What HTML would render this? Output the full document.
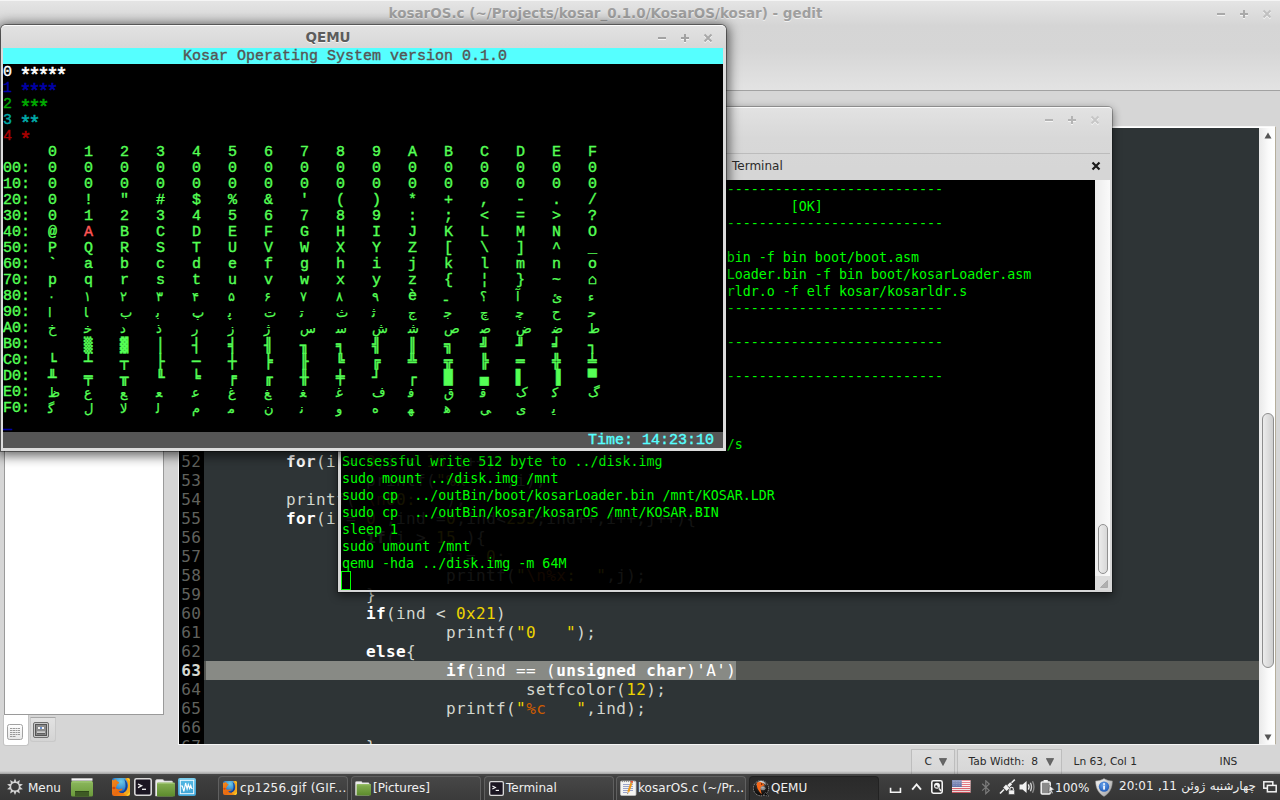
<!DOCTYPE html>
<html lang="en"><head><meta charset="utf-8"><title>kosarOS.c - gedit</title>
<style>
html,body{margin:0;padding:0}
body{width:1280px;height:800px;overflow:hidden;position:relative;background:#d6d6d6;font-family:"DejaVu Sans","Liberation Sans",sans-serif;font-size:13px;color:#2e2e2e}
.a{position:absolute}
/* gedit */
#gtop{left:0;top:0;width:1280px;height:90px;background:linear-gradient(#f6f6f6 0,#f4f4f4 1px,#e4e4e4 1.5px,#e3e3e3 3px,#d5d5d5 26px,#d6d6d6 50px,#e3e3e3 90px)}
#gline{left:0;top:90px;width:1280px;height:1px;background:#a2a2a2}
#gtitle{left:0;top:5px;width:1211px;text-align:center;font-weight:bold;font-size:13.5px;color:#9f9f9f;text-shadow:0 1px 0 #f2f2f2;white-space:nowrap}
.wb{font-weight:bold;color:#b4b4b4;text-shadow:0 1px 0 #f4f4f4}
.wb i{position:absolute;background:currentColor;box-shadow:0 1px 0 #f4f4f4}
#side{left:4px;top:95px;width:158px;height:618px;background:#fff;border:1px solid #9a9a9a}
#stab1{left:3px;top:715px;width:26px;height:31px;background:#fff;border:1px solid #c4c4c4;border-top:none;border-radius:0 0 3px 3px;box-sizing:border-box}
#stab2{left:30px;top:717px;width:26px;height:25px;background:linear-gradient(#e2e2e2,#d4d4d4);border:1px solid #c9c9c9;border-top-color:#a8a8a8;border-radius:0 0 3px 3px;box-sizing:border-box}
#edframe{left:178px;top:126px;width:1098px;height:619px;background:#fff;box-sizing:border-box;border:1px solid #f6f6f6;border-right-color:#b5ae9c}
#gut{left:179px;top:128px;width:25px;height:616px;background:#000;overflow:hidden}
#codebg{left:204px;top:128px;width:1055px;height:616px;background:#2e3436;overflow:hidden}
.mono{font-family:"DejaVu Sans Mono","Liberation Mono",monospace}
#gut .in{position:absolute;left:0;top:1px;width:22.3px;text-align:right;font-size:16px;letter-spacing:0.37px;line-height:19px;color:#60625e}
#gut .cur{color:#d3d7cf;font-weight:bold}
#codebg .in{position:absolute;left:0;top:1px;width:1055px;font-size:16px;letter-spacing:0.37px;line-height:19px;color:#d3d7cf}
.ln{height:19px;padding-left:2px;white-space:pre;tab-size:8}
.ln.cur{background:#555753}
.ln b{color:#fff}
.n{color:#edd400}.o{color:#ce5c00}
.sel{background:#888a85;color:#fff;display:inline-block;height:19px}
#vsb{left:1259px;top:128px;width:16px;height:616px;background:linear-gradient(90deg,#e9e9e9,#fbfbfb 60%,#fff)}
#vthumb{left:1262px;top:413px;width:12px;height:255px;box-sizing:border-box;border:1px solid #8e8e8e;border-radius:7px;background:linear-gradient(90deg,#ececec,#cfcfcf)}
/* status bar */
.sbtn{top:749px;height:25px;box-sizing:border-box;border:1px solid #bdbdbd;border-bottom:none;background:linear-gradient(#dedede,#d6d6d6);font-size:12px}
.st12{top:755.5px;font-size:10.67px;line-height:12px;color:#2a2a2a;white-space:nowrap}
/* terminal */
#twin{left:338px;top:107px;width:774px;height:485px;background:linear-gradient(#e2e2e2 0,#d8d8d8 30px,#d6d6d6 60px);border-radius:4px 4px 0 0;box-shadow:0 0 0 1px rgba(0,0,0,.25),0 3px 9px 1px rgba(0,0,0,.45);border-top:1px solid #fafafa;box-sizing:border-box}
#tscr{left:341px;top:180px;width:754px;height:410px;background:#000;overflow:hidden}
#tscr .in{position:absolute;left:1px;top:1px;font-size:13.325px;line-height:17px;color:#00ff00}
#tscr .in div{height:17px;white-space:pre}
.ghost{position:absolute;left:-137px;top:272px;width:1055px;font-size:16px;letter-spacing:0.37px;line-height:19px;color:#d3d7cf;opacity:.085}
.ghost .ln b{color:#fff}
.tcur{position:absolute;left:-1px;top:390px;width:10px;height:19px;box-sizing:border-box;border:1px solid #00ff00}
/* qemu */
#qwin{left:1px;top:25px;width:725px;height:426px;background:linear-gradient(#e2e2e2 0,#d7d7d7 23px,#dcdcdc 23px);border-radius:5px 5px 0 0;box-shadow:0 0 0 1px rgba(0,0,0,.4),0 2px 12px 3px rgba(0,0,0,.6);border-top:1px solid #fcfcfc;box-sizing:border-box}
#qtitle{left:1px;top:29px;width:654px;text-align:center;font-weight:bold;font-size:13.5px;color:#5c5c5c;text-shadow:0 1px 0 #f6f6f6}
#vga{left:3px;top:48px;width:720px;height:400px;background:#000;overflow:hidden;font-family:"Liberation Mono","DejaVu Sans Mono",monospace;font-weight:normal;-webkit-text-stroke:0.4px;font-size:15px;line-height:16px;color:#55ff55}
.r{height:16px;overflow:visible;white-space:pre;position:relative;top:1px}
.t0,.st{top:0;line-height:18px}
.as{position:relative;top:6px;left:-1.5px;font-size:20px;letter-spacing:-3px;line-height:0;-webkit-text-stroke:0.6px}
.t0{background:#55ffff;color:#555}
.st{background:#555;color:#55ffff}
.l{display:inline-block;width:45px;height:16px;vertical-align:top}
.c{display:inline-block;width:36px;height:16px;vertical-align:top}
.c.red{color:#ff5555}
.c.ar{font-family:"DejaVu Sans","DejaVu Sans Mono",sans-serif;font-size:13px;font-weight:normal;direction:ltr;-webkit-text-stroke:0.25px}
.c.bx{font-family:"DejaVu Sans Mono",monospace;font-weight:normal;font-size:14px;-webkit-text-stroke:0.55px}
/* panel */
#panel{left:0;top:774px;width:1280px;height:26px;background:linear-gradient(#484848 0,#3f3f3f 3px,#353535 26px);color:#eee;font-size:12px}
#pshadow{left:0;top:771px;width:1280px;height:3px;background:linear-gradient(rgba(0,0,0,0),rgba(0,0,0,.25))}
.tb{top:776px;height:25px;width:130px;box-sizing:border-box;border:1px solid #606060;border-bottom:none;border-radius:4px 4px 0 0;background:linear-gradient(#474747,#3a3a3a);color:#f0f0f0;font-size:12px;line-height:22px;white-space:nowrap;overflow:hidden}
.tb.act{background:linear-gradient(#2a2a2a,#303030);border-color:#222}
.tb span{position:absolute;left:21px;top:0}
.tray{color:#f0f0f0;font-size:12px;white-space:nowrap}
</style></head><body>

<!-- gedit main window -->
<div class="a" id="gtop"></div>
<div class="a" id="gline"></div>
<div class="a" id="gtitle">kosarOS.c (~/Projects/kosar_0.1.0/KosarOS/kosar) - gedit</div>
<div class="a wb" style="left:1217px;top:13px;width:8px;height:2px;background:#a9a9a9;box-shadow:0 1px 0 #f4f4f4"></div>
<div class="a wb" style="left:1240px;top:13px;width:8px;height:2px;background:#a9a9a9;box-shadow:0 1px 0 #f4f4f4"></div>
<div class="a wb" style="left:1243px;top:10px;width:2px;height:8px;background:#a9a9a9;box-shadow:0 1px 0 #f4f4f4"></div>
<svg class="a" style="left:1262px;top:9px" width="10" height="11" viewBox="0 0 10 11"><path d="M1.5 2.5l7 7M8.5 2.5l-7 7" stroke="#f4f4f4" stroke-width="2"/><path d="M1.5 1.5l7 7M8.5 1.5l-7 7" stroke="#c0c0c0" stroke-width="2"/></svg>

<div class="a" id="side"></div>
<div class="a" id="stab2"></div>
<div class="a" id="stab1"></div>

<div class="a" id="edframe"></div>
<div class="a mono" id="gut"><div class="in">
<div>35</div>
<div>36</div>
<div>37</div>
<div>38</div>
<div>39</div>
<div>40</div>
<div>41</div>
<div>42</div>
<div>43</div>
<div>44</div>
<div>45</div>
<div>46</div>
<div>47</div>
<div>48</div>
<div>49</div>
<div>50</div>
<div>51</div>
<div>52</div>
<div>53</div>
<div>54</div>
<div>55</div>
<div>56</div>
<div>57</div>
<div>58</div>
<div>59</div>
<div>60</div>
<div>61</div>
<div>62</div>
<div class="cur">63</div>
<div>64</div>
<div>65</div>
<div>66</div>
<div>67</div>
</div></div>
<div class="a mono" id="codebg"><div class="in">
<div class="ln"></div>
<div class="ln"></div>
<div class="ln"></div>
<div class="ln"></div>
<div class="ln"></div>
<div class="ln"></div>
<div class="ln"></div>
<div class="ln"></div>
<div class="ln"></div>
<div class="ln"></div>
<div class="ln"></div>
<div class="ln"></div>
<div class="ln"></div>
<div class="ln"></div>
<div class="ln"></div>
<div class="ln"></div>
<div class="ln"></div>
<div class="ln">	<b>for</b>(i = <span class="n">0</span>;i &lt; <span class="n">16</span>;i++)</div>
<div class="ln">		printf(<span class="n">"%x   "</span>,i);</div>
<div class="ln">	printf(<span class="n">"</span><span class="o">\n</span><span class="n">00:  "</span>);</div>
<div class="ln">	<b>for</b>(i = <span class="n">0</span> ,ind =<span class="n">0</span>,ind&lt;<span class="n">255</span>;ind++,i++,j++){</div>
<div class="ln">		<b>if</b>(i &gt; <span class="n">15</span> ){</div>
<div class="ln">			i = <span class="n">0</span>;</div>
<div class="ln">			printf(<span class="n">"</span><span class="o">\n%x</span><span class="n">:  "</span>,j);</div>
<div class="ln">		}</div>
<div class="ln">		<b>if</b>(ind &lt; <span class="n">0x21</span>)</div>
<div class="ln">			printf(<span class="n">"0   "</span>);</div>
<div class="ln">		<b>else</b>{</div>
<div class="ln cur"><span class="sel">			<b>if</b>(ind == (<b>unsigned char</b>)'A')</span></div>
<div class="ln">				setfcolor(<span class="n">12</span>);</div>
<div class="ln">			printf(<span class="n">"</span><span class="o">%c</span><span class="n">   "</span>,ind);</div>
<div class="ln"></div>
<div class="ln">		}</div>
</div></div>
<div class="a" id="vsb"></div>
<div class="a" id="vthumb"></div>
<svg class="a" style="left:1264px;top:132px" width="8" height="7" viewBox="0 0 8 7"><path d="M4 0.5L7.5 6.5H0.5z" fill="#555"/></svg>
<svg class="a" style="left:1264px;top:734px" width="8" height="7" viewBox="0 0 8 7"><path d="M4 6.5L7.5 0.5H0.5z" fill="#555"/></svg>

<!-- status bar -->
<div class="a sbtn" style="left:911px;width:44px"></div>
<div class="a sbtn" style="left:957px;width:105px"></div>
<div class="a st12" style="left:924.5px">C</div>
<svg class="a" style="left:939px;top:758px" width="8" height="8" viewBox="0 0 8 8"><path d="M0.3 0.5H7.7L4 7.5z" fill="#666" stroke="#4a4a4a" stroke-width=".6"/></svg>
<div class="a st12" style="left:968.6px;white-space:pre">Tab Width:  8</div>
<svg class="a" style="left:1046px;top:758px" width="8" height="8" viewBox="0 0 8 8"><path d="M0.3 0.5H7.7L4 7.5z" fill="#666" stroke="#4a4a4a" stroke-width=".6"/></svg>
<div class="a st12" style="left:1073.5px">Ln 63, Col 1</div>
<div class="a st12" style="left:1219.5px">INS</div>

<!-- terminal window -->
<div class="a" id="twin"></div>
<div class="a" style="left:341px;top:153px;width:769px;height:1px;background:#bcbcbc"></div>
<div class="a" style="left:732px;top:159px;font-size:12px;color:#2a2a2a">Terminal</div>
<svg class="a" style="left:1091px;top:161px" width="10" height="10" viewBox="0 0 10 10"><path d="M1.5 1.5l7 7M8.5 1.5l-7 7" stroke="#1a1a1a" stroke-width="2.2"/></svg>
<div class="a" style="left:1045px;top:119px;width:8px;height:2px;background:#b4b4b4;box-shadow:0 1px 0 #f4f4f4"></div>
<div class="a" style="left:1068px;top:119px;width:8px;height:2px;background:#b4b4b4;box-shadow:0 1px 0 #f4f4f4"></div>
<div class="a" style="left:1071px;top:116px;width:2px;height:8px;background:#b4b4b4;box-shadow:0 1px 0 #f4f4f4"></div>
<svg class="a" style="left:1090px;top:115px" width="10" height="11" viewBox="0 0 10 11"><path d="M1.5 2.5l7 7M8.5 2.5l-7 7" stroke="#f4f4f4" stroke-width="2"/><path d="M1.5 1.5l7 7M8.5 1.5l-7 7" stroke="#c6c6c6" stroke-width="2"/></svg>
<div class="a" style="left:1095px;top:180px;width:15px;height:410px;background:linear-gradient(90deg,#ececec,#fafafa)"></div>
<div class="a" style="left:1098px;top:524px;width:10px;height:50px;box-sizing:border-box;border:1px solid #909090;border-radius:5px;background:linear-gradient(90deg,#ececec,#d8d8d8)"></div>
<div class="a" style="left:1095px;top:576px;width:15px;height:14px;background:#dcdcdc"></div>
<svg class="a" style="left:1100px;top:580px" width="8" height="8" viewBox="0 0 8 8"><path d="M7.5 0.5V7.5H0.5z" fill="#b0b0b0" stroke="#999" stroke-width=".6"/></svg>
<div class="a mono" id="tscr"><div class="ghost"><div class="ln">	<b>for</b>(i = <span class="n">0</span>;i &lt; <span class="n">16</span>;i++)</div><div class="ln">		printf(<span class="n">"%x   "</span>,i);</div><div class="ln">	printf(<span class="n">"</span><span class="o">\n</span><span class="n">00:  "</span>);</div><div class="ln">	<b>for</b>(i = <span class="n">0</span> ,ind =<span class="n">0</span>,ind&lt;<span class="n">255</span>;ind++,i++,j++){</div><div class="ln">		<b>if</b>(i &gt; <span class="n">15</span> ){</div><div class="ln">			i = <span class="n">0</span>;</div><div class="ln">			printf(<span class="n">"</span><span class="o">\n%x</span><span class="n">:  "</span>,j);</div><div class="ln">		}</div></div><div class="in">
<div>---------------------------------------------------------------------------</div>
<div>                                                        [OK]</div>
<div>---------------------------------------------------------------------------</div>
<div></div>
<div>                                                bin -f bin boot/boot.asm</div>
<div>                                                Loader.bin -f bin boot/kosarLoader.asm</div>
<div>                                                rldr.o -f elf kosar/kosarldr.s</div>
<div>---------------------------------------------------------------------------</div>
<div></div>
<div>---------------------------------------------------------------------------</div>
<div></div>
<div>---------------------------------------------------------------------------</div>
<div></div>
<div></div>
<div></div>
<div>                                                /s</div>
<div>Sucsessful write 512 byte to ../disk.img</div>
<div>sudo mount ../disk.img /mnt</div>
<div>sudo cp  ../outBin/boot/kosarLoader.bin /mnt/KOSAR.LDR</div>
<div>sudo cp  ../outBin/kosar/kosarOS /mnt/KOSAR.BIN</div>
<div>sleep 1</div>
<div>sudo umount /mnt</div>
<div>qemu -hda ../disk.img -m 64M</div>
<div><span class="tcur"></span></div>
</div></div>

<!-- QEMU window -->
<div class="a" id="qwin"></div>
<div class="a" id="qtitle">QEMU</div>
<div class="a" style="left:658px;top:36.5px;width:8px;height:2px;background:#a2a2a2;box-shadow:0 1px 0 #f6f6f6"></div>
<div class="a" style="left:681px;top:36.5px;width:8px;height:2px;background:#a2a2a2;box-shadow:0 1px 0 #f6f6f6"></div>
<div class="a" style="left:684px;top:33.5px;width:2px;height:8px;background:#a2a2a2;box-shadow:0 1px 0 #f6f6f6"></div>
<svg class="a" style="left:703px;top:33px" width="10" height="11" viewBox="0 0 10 11"><path d="M1.5 2.5l7 7M8.5 2.5l-7 7" stroke="#f6f6f6" stroke-width="2"/><path d="M1.5 1.5l7 7M8.5 1.5l-7 7" stroke="#a8a8a8" stroke-width="2"/></svg>
<div class="a" id="vga">
<div class="r t0">                    Kosar Operating System version 0.1.0</div>
<div class="r" style="color:#fff">0 <span class="as">*****</span></div>
<div class="r" style="color:#0000aa">1 <span class="as">****</span></div>
<div class="r" style="color:#00aa00">2 <span class="as">***</span></div>
<div class="r" style="color:#00aaaa">3 <span class="as">**</span></div>
<div class="r" style="color:#aa0000">4 <span class="as">*</span></div>
<div class="r"><span class="l"> </span><span class="c">0</span><span class="c">1</span><span class="c">2</span><span class="c">3</span><span class="c">4</span><span class="c">5</span><span class="c">6</span><span class="c">7</span><span class="c">8</span><span class="c">9</span><span class="c">A</span><span class="c">B</span><span class="c">C</span><span class="c">D</span><span class="c">E</span><span class="c">F</span></div>
<div class="r"><span class="l">00:</span><span class="c">0</span><span class="c">0</span><span class="c">0</span><span class="c">0</span><span class="c">0</span><span class="c">0</span><span class="c">0</span><span class="c">0</span><span class="c">0</span><span class="c">0</span><span class="c">0</span><span class="c">0</span><span class="c">0</span><span class="c">0</span><span class="c">0</span><span class="c">0</span></div>
<div class="r"><span class="l">10:</span><span class="c">0</span><span class="c">0</span><span class="c">0</span><span class="c">0</span><span class="c">0</span><span class="c">0</span><span class="c">0</span><span class="c">0</span><span class="c">0</span><span class="c">0</span><span class="c">0</span><span class="c">0</span><span class="c">0</span><span class="c">0</span><span class="c">0</span><span class="c">0</span></div>
<div class="r"><span class="l">20:</span><span class="c">0</span><span class="c">!</span><span class="c">"</span><span class="c">#</span><span class="c">$</span><span class="c">%</span><span class="c">&amp;</span><span class="c">'</span><span class="c">(</span><span class="c">)</span><span class="c">*</span><span class="c">+</span><span class="c">,</span><span class="c">-</span><span class="c">.</span><span class="c">/</span></div>
<div class="r"><span class="l">30:</span><span class="c">0</span><span class="c">1</span><span class="c">2</span><span class="c">3</span><span class="c">4</span><span class="c">5</span><span class="c">6</span><span class="c">7</span><span class="c">8</span><span class="c">9</span><span class="c">:</span><span class="c">;</span><span class="c">&lt;</span><span class="c">=</span><span class="c">&gt;</span><span class="c">?</span></div>
<div class="r"><span class="l">40:</span><span class="c">@</span><span class="c red">A</span><span class="c">B</span><span class="c">C</span><span class="c">D</span><span class="c">E</span><span class="c">F</span><span class="c">G</span><span class="c">H</span><span class="c">I</span><span class="c">J</span><span class="c">K</span><span class="c">L</span><span class="c">M</span><span class="c">N</span><span class="c">O</span></div>
<div class="r"><span class="l">50:</span><span class="c">P</span><span class="c">Q</span><span class="c">R</span><span class="c">S</span><span class="c">T</span><span class="c">U</span><span class="c">V</span><span class="c">W</span><span class="c">X</span><span class="c">Y</span><span class="c">Z</span><span class="c">[</span><span class="c">\</span><span class="c">]</span><span class="c">^</span><span class="c">_</span></div>
<div class="r"><span class="l">60:</span><span class="c">`</span><span class="c">a</span><span class="c">b</span><span class="c">c</span><span class="c">d</span><span class="c">e</span><span class="c">f</span><span class="c">g</span><span class="c">h</span><span class="c">i</span><span class="c">j</span><span class="c">k</span><span class="c">l</span><span class="c">m</span><span class="c">n</span><span class="c">o</span></div>
<div class="r"><span class="l">70:</span><span class="c">p</span><span class="c">q</span><span class="c">r</span><span class="c">s</span><span class="c">t</span><span class="c">u</span><span class="c">v</span><span class="c">w</span><span class="c">x</span><span class="c">y</span><span class="c">z</span><span class="c">{</span><span class="c">¦</span><span class="c">}</span><span class="c">~</span><span class="c">⌂</span></div>
<div class="r"><span class="l">80:</span><span class="c ar">۰</span><span class="c ar">۱</span><span class="c ar">۲</span><span class="c ar">۳</span><span class="c ar">۴</span><span class="c ar">۵</span><span class="c ar">۶</span><span class="c ar">۷</span><span class="c ar">۸</span><span class="c ar">۹</span><span class="c">è</span><span class="c ar">ـ</span><span class="c ar">؟</span><span class="c ar">آ</span><span class="c ar">ئ</span><span class="c ar">ء</span></div>
<div class="r"><span class="l">90:</span><span class="c ar">ﺍ</span><span class="c ar">ﺎ</span><span class="c ar">ﺏ</span><span class="c ar">ﺑ</span><span class="c ar">ﭖ</span><span class="c ar">ﭘ</span><span class="c ar">ﺕ</span><span class="c ar">ﺗ</span><span class="c ar">ﺙ</span><span class="c ar">ﺛ</span><span class="c ar">ﺝ</span><span class="c ar">ﺟ</span><span class="c ar">ﭺ</span><span class="c ar">ﭼ</span><span class="c ar">ﺡ</span><span class="c ar">ﺣ</span></div>
<div class="r"><span class="l">A0:</span><span class="c ar">ﺥ</span><span class="c ar">ﺧ</span><span class="c ar">د</span><span class="c ar">ذ</span><span class="c ar">ر</span><span class="c ar">ز</span><span class="c ar">ژ</span><span class="c ar">ﺱ</span><span class="c ar">ﺳ</span><span class="c ar">ﺵ</span><span class="c ar">ﺷ</span><span class="c ar">ﺹ</span><span class="c ar">ﺻ</span><span class="c ar">ﺽ</span><span class="c ar">ﺿ</span><span class="c ar">ط</span></div>
<div class="r"><span class="l">B0:</span><span class="c bx"> </span><span class="c bx">▒</span><span class="c bx">▓</span><span class="c bx">│</span><span class="c bx">┤</span><span class="c bx">╡</span><span class="c bx">╢</span><span class="c bx">╖</span><span class="c bx">╕</span><span class="c bx">╣</span><span class="c bx">║</span><span class="c bx">╗</span><span class="c bx">╝</span><span class="c bx">╜</span><span class="c bx">╛</span><span class="c bx">┐</span></div>
<div class="r"><span class="l">C0:</span><span class="c bx">└</span><span class="c bx">┴</span><span class="c bx">┬</span><span class="c bx">├</span><span class="c bx">─</span><span class="c bx">┼</span><span class="c bx">╞</span><span class="c bx">╟</span><span class="c bx">╚</span><span class="c bx">╔</span><span class="c bx">╩</span><span class="c bx">╦</span><span class="c bx">╠</span><span class="c bx">═</span><span class="c bx">╬</span><span class="c bx">╧</span></div>
<div class="r"><span class="l">D0:</span><span class="c bx">╨</span><span class="c bx">╤</span><span class="c bx">╥</span><span class="c bx">╙</span><span class="c bx">╘</span><span class="c bx">╒</span><span class="c bx">╓</span><span class="c bx">╫</span><span class="c bx">╪</span><span class="c bx">┘</span><span class="c bx">┌</span><span class="c bx">█</span><span class="c bx">▄</span><span class="c bx">▌</span><span class="c bx">▐</span><span class="c bx">▀</span></div>
<div class="r"><span class="l">E0:</span><span class="c ar">ظ</span><span class="c ar">ﻉ</span><span class="c ar">ﻊ</span><span class="c ar">ﻌ</span><span class="c ar">ﻋ</span><span class="c ar">ﻍ</span><span class="c ar">ﻎ</span><span class="c ar">ﻐ</span><span class="c ar">ﻏ</span><span class="c ar">ﻑ</span><span class="c ar">ﻓ</span><span class="c ar">ﻕ</span><span class="c ar">ﻗ</span><span class="c ar">ﮎ</span><span class="c ar">ﮐ</span><span class="c ar">ﮒ</span></div>
<div class="r"><span class="l">F0:</span><span class="c ar">ﮔ</span><span class="c ar">ﻝ</span><span class="c ar">ﻻ</span><span class="c ar">ﻟ</span><span class="c ar">ﻡ</span><span class="c ar">ﻣ</span><span class="c ar">ﻥ</span><span class="c ar">ﻧ</span><span class="c ar">ﻭ</span><span class="c ar">ﻩ</span><span class="c ar">ﻬ</span><span class="c ar">ﻫ</span><span class="c ar">ﻰ</span><span class="c ar">ﻯ</span><span class="c ar">ﻳ</span><span class="c ar"> </span></div>
<div class="r" style="color:#0000aa;-webkit-text-stroke:1px">_</div>
<div class="r st">                                                                 Time: 14:23:10</div>
</div>

<!-- bottom panel -->
<div class="a" id="pshadow"></div>
<div class="a" id="panel"></div>
<div class="a tray" style="left:28px;top:781px;font-size:12px">Menu</div>

<div class="a tb" style="left:218px"><span style="letter-spacing:.28px">cp1256.gif (GIF...</span></div>
<div class="a tb" style="left:351px"><span style="left:21px">[Pictures]</span></div>
<div class="a tb" style="left:484px"><span style="left:21px">Terminal</span></div>
<div class="a tb" style="left:616px"><span style="left:21px;letter-spacing:.07px">kosarOS.c (~/Pr...</span></div>
<div class="a tb act" style="left:749px"><span style="left:21px">QEMU</span></div>

<div class="a tray" style="left:1055px;top:780.5px">100%</div>
<div class="a tray" dir="rtl" style="left:1119px;top:779px;width:140px;text-align:left;letter-spacing:.1px;word-spacing:.5px">چهارشنبه ژوئن 11, 20:01</div>

<!-- side panel tab icons -->
<svg class="a" style="left:7px;top:724px" width="16" height="16" viewBox="0 0 16 16"><defs><linearGradient id="gd1" x1="0" y1="0" x2="0" y2="1"><stop offset="0" stop-color="#fff"/><stop offset="1" stop-color="#e6e6e6"/></linearGradient></defs><rect x=".5" y=".5" width="15" height="15" rx="2" fill="url(#gd1)" stroke="#a2a2a2"/><path d="M3 4.5h10M3 6.5h10M3 8.5h10M3 10.5h10M3 12.5h6" stroke="#9a9a9a" stroke-width="1" stroke-dasharray="2 .5 3 .5 1.5 .5"/></svg>
<svg class="a" style="left:33px;top:722px" width="16" height="16" viewBox="0 0 16 16"><rect x=".5" y=".5" width="15" height="15" rx="1.5" fill="#c8c8c8" stroke="#6e6e6e"/><rect x="2.5" y="2.5" width="11" height="11" fill="#8c8c8c" stroke="#555"/><rect x="4.5" y="4.5" width="7" height="3" rx=".5" fill="#f4f4f4" stroke="#666" stroke-width=".6"/><rect x="7" y="5.2" width="2" height="1.6" fill="#4a7bc8"/><rect x="4" y="9.5" width="8" height="1.2" fill="#e8e8e8"/><rect x="4" y="11.2" width="8" height="1" fill="#555"/></svg>

<!-- panel: menu gear -->
<svg class="a" style="left:6px;top:778px" width="18" height="18" viewBox="-9 -8.7 18 18"><path fill-rule="evenodd" fill="#d2d2d2" d="M0.00 -8.30L1.55 -4.76L4.88 -6.71L4.05 -2.94L7.89 -2.56L5.00 0.00L7.89 2.56L4.05 2.94L4.88 6.71L1.55 4.76L0.00 8.30L-1.55 4.76L-4.88 6.71L-4.05 2.94L-7.89 2.56L-5.00 0.00L-7.89 -2.56L-4.05 -2.94L-4.88 -6.71L-1.55 -4.76z M3.80 0A3.80 3.80 0 1 0 -3.80 0A3.80 3.80 0 1 0 3.80 0z"/></svg>
<!-- show desktop -->
<svg class="a" style="left:71px;top:778px" width="22" height="19" viewBox="0 0 22 19"><defs><linearGradient id="gsd" x1="0" y1="0" x2="0" y2="1"><stop offset="0" stop-color="#8db85e"/><stop offset="1" stop-color="#6a9a3a"/></linearGradient></defs><rect x="0" y="3" width="22" height="15.5" rx="1.5" fill="url(#gsd)"/><rect x="0.5" y="0.3" width="21" height="2.4" fill="#f2f2f2"/><rect x="1" y="3.5" width="20" height="1" fill="#a9cf80" opacity=".7"/><rect x="4" y="13" width="14" height="5.5" fill="#3e5a24"/><rect x="4" y="13" width="14" height="1" fill="#2f4719"/></svg>
<!-- firefox big -->
<svg class="a" style="left:112px;top:778px" width="18" height="18" viewBox="0 0 18 18"><defs><radialGradient id="ffb" cx=".5" cy=".2" r=".8"><stop offset="0" stop-color="#6ccbe8"/><stop offset=".45" stop-color="#3c93d4"/><stop offset=".8" stop-color="#154aa6"/><stop offset="1" stop-color="#0d2f86"/></radialGradient><linearGradient id="ffo" x1="0" y1="0" x2="1" y2="1"><stop offset="0" stop-color="#f28c1e"/><stop offset=".55" stop-color="#ea6a10"/><stop offset="1" stop-color="#f09a18"/></linearGradient></defs><rect width="18" height="18" rx="2.2" fill="url(#ffb)"/><path d="M0 1.8L1.6 2.6L3.6 1L4.6 2.6L7.2 4.6L6.8 5.6L5.4 6L5 7.6L3.8 9.2L4.4 10.8L7 11.4L10.4 10.6L10 12.2L6.6 13.4C8.6 15.6 12 15.4 14.2 13C15.8 11 16.4 8 15.8 5C15.3 3.2 14.5 1.8 13.2 0.7L15.8 0Q18 0 18 2.2V15.8Q18 18 15.8 18H2.2Q0 18 0 15.8z" fill="url(#ffo)"/><path d="M13.2 0.7C14.5 1.8 15.3 3.2 15.8 5C16.4 8 15.8 11 14.2 13C13.4 14 12.4 14.8 11.2 15.3L15 17.8Q18 17.6 18 15.8V2.2Q18 0 15.8 0z" fill="#f4a81c"/><path d="M15 .2Q17.8 .2 17.8 3L16.6 2.2z M17.8 14Q17.8 17.8 14.5 17.8L16.5 15.5z" fill="#fbe02a"/><ellipse cx="1.9" cy="10" rx="1.6" ry="1.3" fill="#c8360a" opacity=".75"/><path d="M12.2 1.2C15 3 16 7 15 10.5C14 13 12 14.6 9.5 14.9C12 13.5 13.3 11.5 13.5 8.5C13.6 5.5 13.2 3 12.2 1.2z" fill="#0e2f8a" opacity=".8"/><path d="M7 13.6C9 15 11.5 14.8 13 13.6C11.5 14 9 13.8 7 13.6z" fill="#16308a"/></svg>
<!-- terminal big -->
<svg class="a" style="left:134px;top:778px" width="18" height="18" viewBox="0 0 18 18"><rect x=".8" y=".8" width="16.4" height="16.4" rx="1.6" fill="#1b1622" stroke="#d8d8d8" stroke-width="1.6"/><path d="M4 6l3.6 1.8L4 9.6" fill="none" stroke="#f4f4f4" stroke-width="1.3"/><path d="M8 11.3h4" stroke="#f4f4f4" stroke-width="1.3"/></svg>
<!-- folder big -->
<svg class="a" style="left:155px;top:779px" width="20" height="18" viewBox="0 0 20 18"><defs><linearGradient id="gfo" x1="0" y1="0" x2="0" y2="1"><stop offset="0" stop-color="#86b153"/><stop offset="1" stop-color="#5c8a2c"/></linearGradient></defs><path d="M0.5 17V2.2Q0.5 0.5 2 0.5H7.5Q8.8 0.5 9 2H16.5Q17.8 2 17.8 3.5V17z" fill="#ececec" stroke="#c9c9c9" stroke-width=".6"/><rect x="2" y="3.6" width="18" height="13.9" rx="1" fill="url(#gfo)"/><rect x="2.5" y="4" width="17" height="1" fill="#a6cb7c" opacity=".7"/></svg>
<!-- system monitor -->
<svg class="a" style="left:178px;top:778px" width="18" height="18" viewBox="0 0 18 18"><defs><linearGradient id="gsm" x1="0" y1="0" x2="0" y2="1"><stop offset="0" stop-color="#7fd2f0"/><stop offset=".2" stop-color="#52b6e2"/><stop offset="1" stop-color="#3ea4d6"/></linearGradient></defs><rect width="18" height="18" rx="2" fill="url(#gsm)"/><rect x="2.3" y="2.3" width="13.4" height="13.4" fill="none" stroke="#f2fbff" stroke-width="1"/><path d="M2.5 8h1.8l1.6 5.5L7.6 5l1.5 6 1.2-4.5 1.3 4 1.1-3 1 3h.9" fill="none" stroke="#fff" stroke-width="1.1"/></svg>

<!-- task buttons icons -->
<svg class="a" style="left:223px;top:781px" width="14" height="14" viewBox="0 0 18 18" preserveAspectRatio="none"><rect width="18" height="18" rx="2.2" fill="url(#ffb)"/><path d="M0 1.8L1.6 2.6L3.6 1L4.6 2.6L7.2 4.6L6.8 5.6L5.4 6L5 7.6L3.8 9.2L4.4 10.8L7 11.4L10.4 10.6L10 12.2L6.6 13.4C8.6 15.6 12 15.4 14.2 13C15.8 11 16.4 8 15.8 5C15.3 3.2 14.5 1.8 13.2 0.7L15.8 0Q18 0 18 2.2V15.8Q18 18 15.8 18H2.2Q0 18 0 15.8z" fill="url(#ffo)"/><path d="M13.2 0.7C14.5 1.8 15.3 3.2 15.8 5C16.4 8 15.8 11 14.2 13C13.4 14 12.4 14.8 11.2 15.3L15 17.8Q18 17.6 18 15.8V2.2Q18 0 15.8 0z" fill="#f4a81c"/><path d="M15 .2Q17.8 .2 17.8 3L16.6 2.2z M17.8 14Q17.8 17.8 14.5 17.8L16.5 15.5z" fill="#fbe02a"/><ellipse cx="1.9" cy="10" rx="1.6" ry="1.3" fill="#c8360a" opacity=".75"/><path d="M12.2 1.2C15 3 16 7 15 10.5C14 13 12 14.6 9.5 14.9C12 13.5 13.3 11.5 13.5 8.5C13.6 5.5 13.2 3 12.2 1.2z" fill="#0e2f8a" opacity=".8"/><path d="M7 13.6C9 15 11.5 14.8 13 13.6C11.5 14 9 13.8 7 13.6z" fill="#16308a"/></svg>
<svg class="a" style="left:355px;top:781px" width="16" height="15" viewBox="0 0 20 18" preserveAspectRatio="none"><path d="M0.5 17V2.2Q0.5 0.5 2 0.5H7.5Q8.8 0.5 9 2H16.5Q17.8 2 17.8 3.5V17z" fill="#ececec" stroke="#c9c9c9" stroke-width=".6"/><rect x="2" y="3.6" width="18" height="13.9" rx="1" fill="url(#gfo)"/><rect x="2.5" y="4" width="17" height="1" fill="#a6cb7c" opacity=".7"/></svg>
<svg class="a" style="left:489px;top:781px" width="15" height="15" viewBox="0 0 18 18"><rect x=".8" y=".8" width="16.4" height="16.4" rx="1.6" fill="#1b1622" stroke="#d8d8d8" stroke-width="1.6"/><path d="M4 6l3.6 1.8L4 9.6" fill="none" stroke="#f4f4f4" stroke-width="1.4"/><path d="M8 11.3h4" stroke="#f4f4f4" stroke-width="1.4"/></svg>
<!-- gedit icon -->
<svg class="a" style="left:620px;top:780px" width="17" height="16" viewBox="0 0 17 16"><rect x=".5" y="1" width="15.5" height="14.5" rx="1.2" fill="#f4f4f2" stroke="#bdbdbd" stroke-width=".8"/><path d="M2 1.6h12.5" stroke="#8a8a8a" stroke-width="1" stroke-dasharray="1 1"/><path d="M3 4.5h10M3 6.5h10M3 8.5h10M3 10.5h10M3 12.5h6" stroke="#8e9ac4" stroke-width=".9"/><path d="M11 0.7L13 1.4L9.3 12.3L7.4 11.5z" fill="#f39a14"/><path d="M11 0.7L13 1.4L12.5 2.9L10.5 2.2z" fill="#e8453c"/><path d="M10.5 2.2L12.5 2.9L12.2 3.8L10.2 3.1z" fill="#9aa0a8"/><path d="M7.4 11.3L9.2 12.2L7.3 14.2z" fill="#e8c79a"/><path d="M7.3 14.2L7.7 13L8.3 13.3z" fill="#333"/></svg>
<!-- qemu icon -->
<svg class="a" style="left:753px;top:779.5px" width="17" height="17" viewBox="0 0 17 17"><defs><radialGradient id="gq" cx=".5" cy=".3" r=".75"><stop offset="0" stop-color="#5a5a5a"/><stop offset=".45" stop-color="#2a2624"/><stop offset="1" stop-color="#000"/></radialGradient><linearGradient id="gqh" x1="0" y1="0" x2="0" y2="1"><stop offset="0" stop-color="#fff"/><stop offset="1" stop-color="#fff" stop-opacity=".3"/></linearGradient></defs><circle cx="8" cy="8.2" r="7.6" fill="url(#gq)" stroke="#cfcfcf" stroke-width=".7" stroke-dasharray="1 .8"/><path d="M12.5 12.5L16 16.3L10.5 15z" fill="#050505" stroke="#bdbdbd" stroke-width=".5" stroke-dasharray="1 .8"/><path d="M2.6 6.2C3.4 2.8 6 1 8.2 1C10.6 1 12.8 2.6 13.6 5.6C11.5 3.6 9.6 3 8 3C6.2 3 4.2 4 2.6 6.2z" fill="url(#gqh)" opacity=".9"/><path d="M4 2.6Q5.6 2 7.6 2.1L10 3.3L11.9 5.2L9.4 6.1L7.7 7.9L7.9 10.9L8.8 14.5L7 12.6L4.7 9.1Q3.4 5.5 4 2.6z" fill="#f5681a"/><circle cx="8.7" cy="4" r=".65" fill="#1a0a00"/><ellipse cx="10" cy="8.2" rx="2.5" ry="2" fill="#9c9c9c" opacity=".85"/><ellipse cx="9.6" cy="7.6" rx="1.4" ry="1" fill="#c4c4c4" opacity=".6"/></svg>

<!-- tray -->
<svg class="a" style="left:889px;top:787px" width="13" height="8" viewBox="0 0 13 8"><path d="M1.55 0.8V5.25H11.45V0.8" fill="none" stroke="#f4f4f4" stroke-width="1.6"/></svg>
<svg class="a" style="left:910px;top:781px" width="13" height="10" viewBox="0 0 13 10"><path d="M2.2 8.7L6.6 3.4L11 8.7" fill="none" stroke="#f4f4f4" stroke-width="1.9"/></svg>
<svg class="a" style="left:930px;top:779px" width="14" height="16" viewBox="0 0 14 16"><rect x="1.8" y="1.8" width="10.4" height="12.4" rx="1.6" fill="#2e2e2e" stroke="#f4f4f4" stroke-width="1.6"/><circle cx="7" cy="6.8" r="3" fill="#f4f4f4"/><circle cx="6.3" cy="7.4" r="1.1" fill="#2e2e2e"/><path d="M8 8.2l3 3.8" stroke="#f4f4f4" stroke-width="1.6"/><path d="M7.2 7.6l2 2.6" stroke="#2e2e2e" stroke-width=".7"/></svg>
<svg class="a" style="left:952px;top:780px" width="18.5" height="13" viewBox="0 0 19 13" preserveAspectRatio="none"><defs><linearGradient id="gfl" x1="0" y1="0" x2="0" y2="1"><stop offset="0" stop-color="#fff" stop-opacity=".35"/><stop offset=".5" stop-color="#fff" stop-opacity=".1"/><stop offset="1" stop-color="#000" stop-opacity=".12"/></linearGradient></defs><rect width="19" height="13" rx=".8" fill="#faf0f0"/><path d="M0 .5h19M0 2.5h19M0 4.5h19M0 6.5h19M0 8.5h19M0 10.5h19M0 12.5h19" stroke="#dc5a66" stroke-width="1"/><rect width="10" height="7" fill="#56669f"/><path d="M1 1.5h8M1 3.5h8M1 5.5h8" stroke="#9aa4cc" stroke-width=".6" stroke-dasharray=".7 .9"/><rect width="19" height="13" rx=".8" fill="url(#gfl)"/></svg>
<svg class="a" style="left:981px;top:780px" width="10" height="15" viewBox="0 0 10 15"><path d="M1.2 3.8L8.2 10.4L4.8 13.6V0.8L8.2 4L1.2 10.6" fill="none" stroke="#7c7c7c" stroke-width="1.2"/></svg>
<svg class="a" style="left:999px;top:779px" width="17" height="16" viewBox="0 0 17 16"><path d="M1 14.5L5 10.5" stroke="#f2f2f2" stroke-width="1.6"/><path d="M4.2 8.6L7.6 12L10.5 9.2L7 5.6z" fill="#f2f2f2"/><path d="M8.2 6.2L10.4 8.2L13.2 5.2L11.2 3.2z" fill="#f2f2f2"/><path d="M12.5 3.8L15.8 0.6" stroke="#f2f2f2" stroke-width="1.5"/><rect x="9.6" y="11" width="6" height="4.6" rx=".6" fill="#f2f2f2" stroke="#3a3a3a" stroke-width=".6"/><path d="M10.9 11V9.9a1.7 1.7 0 013.4 0V11" fill="none" stroke="#f2f2f2" stroke-width="1.1"/></svg>
<svg class="a" style="left:1018px;top:779px" width="18" height="16" viewBox="0 0 18 16"><path d="M1.5 5.6H4.6L8.6 2V14L4.6 10.4H1.5z" fill="#f2f2f2"/><path d="M10.4 5.4Q11.8 8 10.4 10.6" fill="none" stroke="#f2f2f2" stroke-width="1.4"/><path d="M12.4 3.8Q14.6 8 12.4 12.2" fill="none" stroke="#cfcfcf" stroke-width="1.4"/><path d="M14.5 2.3Q17.4 8 14.5 13.7" fill="none" stroke="#8c8c8c" stroke-width="1.4"/></svg>
<svg class="a" style="left:1040px;top:779px" width="16" height="16" viewBox="0 0 16 16"><rect x="1.2" y="3" width="9" height="12" rx="1" fill="#8a8a8a" stroke="#f2f2f2" stroke-width="1.5"/><rect x="3.6" y="1" width="4.2" height="2" fill="#f2f2f2"/><path d="M9.5 6.5L14.5 10.8L11.8 11.2L13.2 14.2L11.8 14.8L10.5 11.8L8.8 13.6z" fill="#f2f2f2" stroke="#333" stroke-width=".5"/></svg>
<svg class="a" style="left:1095px;top:778px" width="18" height="19" viewBox="0 0 18 19"><defs><linearGradient id="gsh" x1="0" y1="0" x2="1" y2="1"><stop offset="0" stop-color="#fafafa"/><stop offset="1" stop-color="#9a9a9a"/></linearGradient><radialGradient id="gsi" cx=".45" cy=".35" r=".7"><stop offset="0" stop-color="#6aa6ee"/><stop offset="1" stop-color="#1d56b4"/></radialGradient></defs><path d="M9 .6C11.5 2.2 14.5 3 17.4 3C17.4 10 14.5 15.5 9 18.4C3.5 15.5.6 10 .6 3C3.5 3 6.5 2.2 9 .6z" fill="url(#gsh)" stroke="#8a8a8a" stroke-width=".5"/><circle cx="9" cy="8.6" r="5.2" fill="url(#gsi)"/><rect x="8.2" y="7.6" width="1.7" height="4" fill="#fff"/><rect x="8.2" y="5.2" width="1.7" height="1.6" fill="#fff"/></svg>
<svg class="a" style="left:1263px;top:781px" width="14" height="12" viewBox="0 0 14 12"><rect x=".8" y=".8" width="9" height="6.4" fill="#3a3a3a" stroke="#f2f2f2" stroke-width="1.5"/><rect x="4.4" y="4.4" width="8.8" height="6.4" fill="#3a3a3a" stroke="#f2f2f2" stroke-width="1.5"/></svg>

</body></html>
